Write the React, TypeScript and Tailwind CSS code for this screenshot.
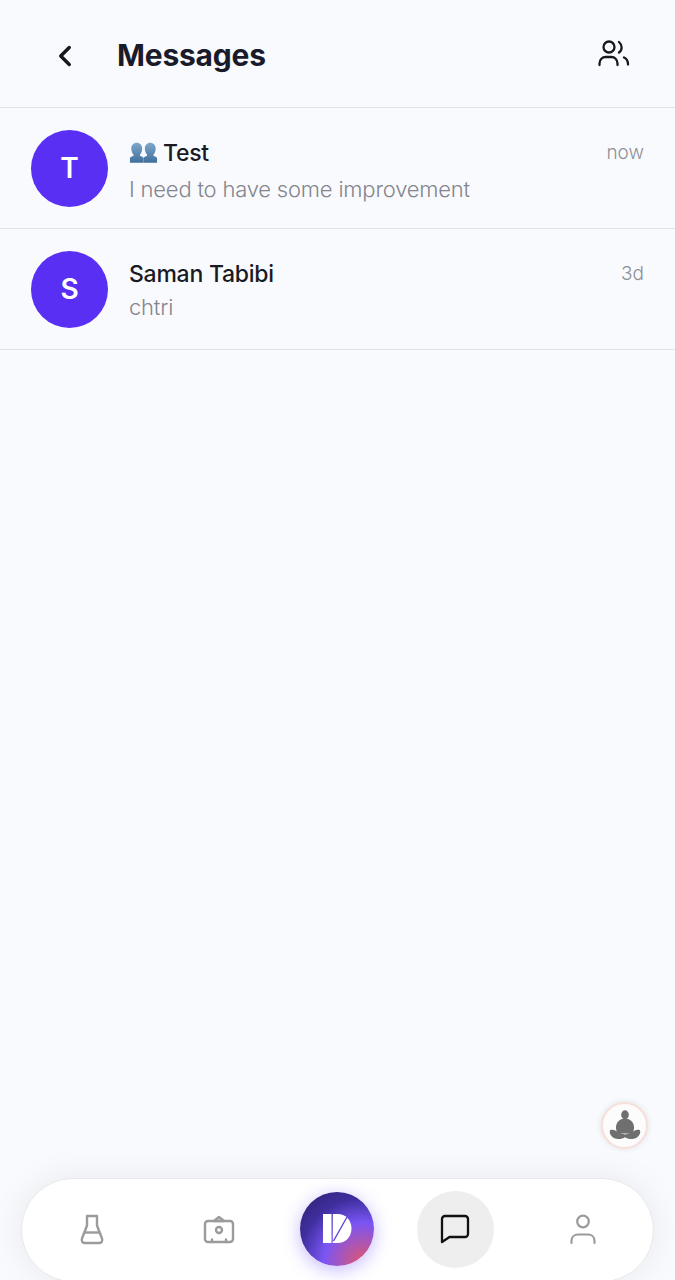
import { ChevronLeft } from 'lucide-react';

const chats = [
  { initial: 'T', name: 'Test', group: true, preview: 'I need to have some improvement', time: 'now' },
  { initial: 'S', name: 'Saman Tabibi', group: false, preview: 'chtri', time: '3d' },
];

function GroupEmoji() {
  return (
    <svg width="29" height="24" viewBox="0 0 30 24" className="shrink-0">
      <defs>
        <linearGradient id="bust" x1="0" y1="0" x2="0" y2="1">
          <stop offset="0" stopColor="#7fa8c9" />
          <stop offset="1" stopColor="#3f6f9c" />
        </linearGradient>
      </defs>
      <path d="M8 1.500c3.400 0 5.600 2.600 5.600 6 0 2.600-1 4.600-2.200 6v1.600c1.600.4 2.900 1 3.600 1.900v5H1v-5c.7-.9 2-1.500 3.600-1.900v-1.600C3.400 12.100 2.400 10.100 2.400 7.500c0-3.400 2.200-6 5.600-6z" fill="url(#bust)" />
      <path d="M22 1.500c3.400 0 5.600 2.600 5.600 6 0 2.600-1 4.600-2.200 6v1.600c1.600.4 2.900 1 3.600 1.900v5H15v-5c.7-.9 2-1.500 3.600-1.900v-1.600C17.400 12.100 16.400 10.100 16.400 7.500c0-3.400 2.200-6 5.600-6z" fill="url(#bust)" />
    </svg>
  );
}

function PeopleIcon() {
  return (
    <svg width="34" height="30" viewBox="0 0 34 30" fill="none" stroke="#16171f" strokeWidth="2.300" strokeLinecap="round">
      <circle cx="12" cy="8" r="5.500" />
      <path d="M22 3c3.500 3 3.500 8 0 10.500" />
      <path d="M2.500 26v-1.500c0-4 3-6.500 6-6.500h6c3 0 6 2.500 6 6.500V26" />
      <path d="M27 18.500c2.500 1 4 3.500 4 7" />
    </svg>
  );
}

function FlaskIcon() {
  return (
    <svg width="24" height="31" viewBox="0 0 24 31" fill="none" stroke="#9b9b9b" strokeWidth="2.400" strokeLinejoin="round">
      <path d="M7 2h10v9.500l5 13c.8 2.300-.5 4.500-2.500 4.500h-15c-2 0-3.300-2.200-2.500-4.500l5-13V2z" />
      <path d="M4.500 18.500h15" />
    </svg>
  );
}

function BagIcon() {
  return (
    <svg width="32" height="30" viewBox="0 0 32 30" fill="none" stroke="#9b9b9b" strokeWidth="2.400" strokeLinejoin="round" strokeLinecap="round">
      <rect x="2" y="7" width="28" height="21" rx="3" />
      <path d="M11 7l5-4 5 4z" />
      <circle cx="16" cy="16" r="3" />
      <path d="M9 28v-2.500M23 28v-2.500" />
    </svg>
  );
}

function ChatIcon() {
  return (
    <svg width="30" height="31" viewBox="0 0 30 31" fill="none" stroke="#111111" strokeWidth="2.300" strokeLinejoin="round">
      <path d="M2 28V5a3 3 0 0 1 3-3h20a3 3 0 0 1 3 3v15a3 3 0 0 1-3 3H9.500z" />
    </svg>
  );
}

function PersonIcon() {
  return (
    <svg width="26" height="31" viewBox="0 0 26 31" fill="none" stroke="#9b9b9b" strokeWidth="2.200" strokeLinecap="round">
      <circle cx="13" cy="7.500" r="5.800" />
      <path d="M1.500 29v-2c0-4 3-6.500 6.500-6.500h10c3.500 0 6.500 2.500 6.500 6.500v2" />
    </svg>
  );
}

function Logo() {
  return (
    <svg width="29" height="30" viewBox="0 0 29 30" fill="white">
      <rect x="0" y="0" width="8.500" height="29" />
      <path d="M9.800 0h4.700c8 0 14 6 14 14.500S22.500 29 14.500 29H9.800z" />
      <path d="M10.500 27L24 3" stroke="#5f46d8" strokeWidth="1.400" fill="none" />
    </svg>
  );
}

function Meditate() {
  return (
    <svg width="32" height="32" viewBox="0 0 30 30" fill="#6f6f6f">
      <ellipse cx="15" cy="4.500" rx="3.600" ry="4.200" />
      <path d="M15 8c5 0 8.500 4 8.500 8.500 0 2.500-.8 4-2 5.500H8.500c-1.200-1.500-2-3-2-5.500C6.500 12 10 8 15 8z" />
      <path d="M1 19c2.500-1.500 6 1 9 2.500l5 1.500 5-1.500c3-1.500 6.500-4 9-2.500 1.200 3.500-2 7-6 8-3.200.8-6-.5-8-1.500-2 1-4.800 2.300-8 1.500-4-1-7.200-4.500-6-8z" />
    </svg>
  );
}

export default function App() {
  return (
    <div className="relative flex h-[1280px] w-[675px] flex-col overflow-hidden bg-[#f9fafe] font-['Inter',sans-serif]">
      {/* Header */}
      <header className="flex h-[108px] shrink-0 items-center justify-between border-b border-[#e2e3e7] pl-[48px] pr-[44px] pt-[4px]">
        <div className="flex items-center gap-[35px]">
          <ChevronLeft className="h-[34px] w-[34px] text-[#16171f]" strokeWidth={2.4} />
          <h1 className="text-[30px] font-bold tracking-[-0.2px] text-[#1a1b2a]">Messages</h1>
        </div>
        <div className="-mt-[4px]">
          <PeopleIcon />
        </div>
      </header>

      {/* Chat list */}
      <div className="flex-1">
        {chats.map((chat) => (
          <div key={chat.initial} className="flex h-[121px] items-center gap-[21px] border-b border-[#e2e3e7] pl-[31px] pr-[31px]">
            <div className="flex h-[77px] w-[77px] shrink-0 items-center justify-center rounded-full bg-[#5a2ff4] text-[28px] font-semibold text-white">
              {chat.initial}
            </div>
            <div className="min-w-0 flex-1 pt-[4px]">
              <div className={`flex items-center justify-between ${chat.group ? 'h-[38px]' : 'h-[32px]'}`}>
                <div className="flex items-center gap-[5px] text-[23px] font-medium tracking-[-0.25px] text-[#191a24]">
                  {chat.group && <GroupEmoji />}
                  <span>{chat.name}</span>
                </div>
                <span className="text-[19px] font-light text-[#8f9097]">{chat.time}</span>
              </div>
              <p className="text-[22px] font-light leading-[34px] tracking-[-0.2px] text-[#84858d]">{chat.preview}</p>
            </div>
          </div>
        ))}
      </div>

      {/* Floating meditation button */}
      <div className="absolute right-[27px] top-[1102px] flex h-[47px] w-[47px] items-center justify-center rounded-full border-2 border-[#f8e0da] bg-[#fcfcfd] shadow-[0_0_6px_rgba(0,0,0,0.1)]">
        <Meditate />
      </div>

      {/* Bottom nav */}
      <nav className="mx-[21px] -mb-[2px] grid h-[104px] shrink-0 grid-cols-[126px_128px_108px_128px_128px] items-center rounded-[52px] border border-[#e9e9ec] bg-white pb-[2px] pl-[7px] shadow-[0_0_36px_rgba(0,0,0,0.07)]">
        <div className="flex justify-center">
          <FlaskIcon />
        </div>
        <div className="flex justify-center">
          <BagIcon />
        </div>
        <div className="flex justify-center">
          <div className="flex h-[74px] w-[74px] items-center justify-center rounded-full bg-[radial-gradient(circle_at_85%_95%,#e0566f_0%,#7a55f5_42%,#3f2f9e_68%,#2c1c6b_100%)] shadow-[0_4px_18px_rgba(110,80,255,0.4)]">
            <Logo />
          </div>
        </div>
        <div className="flex justify-center">
          <div className="flex h-[77px] w-[77px] items-center justify-center rounded-full bg-[#eeeeee]">
            <ChatIcon />
          </div>
        </div>
        <div className="flex justify-center">
          <PersonIcon />
        </div>
      </nav>
    </div>
  );
}
